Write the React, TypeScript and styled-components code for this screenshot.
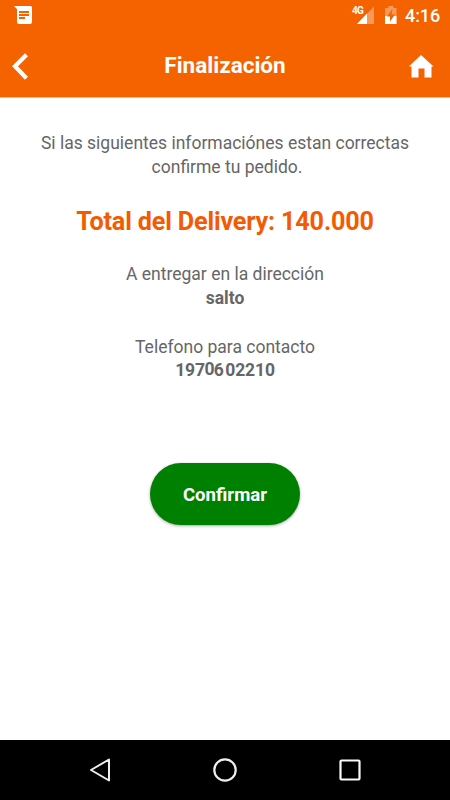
import React from "react";
import styled, { createGlobalStyle } from "styled-components";

const GlobalStyle = createGlobalStyle`
  * { box-sizing: border-box; }
  body { margin: 0; background: #fff; font-family: Roboto, "Liberation Sans", sans-serif; }
`;

const Screen = styled.div`
  width: 450px;
  height: 800px;
  display: flex;
  flex-direction: column;
  overflow: hidden;
  background: #fff;
`;

const Top = styled.div`
  height: 98px;
  background: #f56200;
  color: #fff;
  border-bottom: 1px solid #d8c5c0;
`;

const StatusBar = styled.div`
  height: 32px;
  display: flex;
  align-items: flex-start;
  justify-content: space-between;
  padding: 0 10px 0 13px;
`;

const StatusRight = styled.div`
  display: flex;
`;

const Battery = styled.svg`
  margin-left: 9px;
`;

const Clock = styled.time`
  width: 35px;
  margin-left: 7px;
  font-size: 18px;
  line-height: 32px;
  font-weight: 500;
  letter-spacing: -0.1px;
  white-space: nowrap;
`;

const Network = styled.span`
  width: 12px;
  margin-right: -7px;
  padding-top: 5px;
  font: 700 10px/12px Roboto, sans-serif;
  letter-spacing: -0.8px;
`;

const Header = styled.header`
  height: 65px;
  display: grid;
  grid-template-columns: 60px 1fr 60px;
  align-items: center;
`;

const Title = styled.h1`
  margin: 0;
  text-align: center;
  font-size: 22.5px;
  line-height: 26px;
  font-weight: 700;
`;

const IconButton = styled.button<{ $end?: boolean }>`
  height: 64px;
  padding: 0;
  border: 0;
  background: none;
  display: flex;
  align-items: center;
  justify-content: ${(p) => (p.$end ? "flex-end" : "flex-start")};
`;

const Content = styled.main`
  flex: 1;
  display: flex;
  flex-direction: column;
  align-items: center;
  padding-top: 33px;
  text-align: center;
`;

const Paragraph = styled.p<{ $gap?: number }>`
  margin: ${(p) => p.$gap ?? 0}px 0 0;
  font-size: 17.5px;
  line-height: 24px;
  color: #666;
  white-space: nowrap;
`;

const SecondLine = styled.span`
  padding-left: 4px;
`;

const Total = styled.h2`
  margin: 27px 0 0;
  font-size: 25.2px;
  line-height: 32px;
  font-weight: 700;
  letter-spacing: -0.17px;
  color: #f45a00;
  white-space: nowrap;
`;

const Value = styled.strong<{ $tight?: boolean }>`
  display: block;
  margin-top: ${(p) => (p.$tight ? -1 : 0)}px;
  font-weight: 700;
`;

const Digits = styled.span`
  letter-spacing: -0.12px;
`;

const Raised = styled.span`
  display: inline-block;
  transform: translateY(-1px);
  margin: 0 -0.5px;
`;

const Spaced = styled.span`
  margin-right: 1.5px;
`;

const Confirm = styled.button`
  width: 150px;
  height: 62px;
  margin-top: 81px;
  padding: 1px 0 0;
  border: 0;
  border-radius: 31px;
  background: #008000;
  color: #fff;
  font: 700 18.6px/24px Roboto, sans-serif;
  box-shadow: 0 1px 3px rgba(0, 0, 0, 0.35);
`;

const NavBar = styled.nav`
  height: 60px;
  background: #000;
  display: grid;
  grid-template-columns: repeat(3, 125px);
  justify-content: center;
  align-items: center;
  justify-items: center;
`;

export default function App() {
  return (
    <>
      <GlobalStyle />
      <Screen>
        <Top>
          <StatusBar>
            <svg width="20" height="32" viewBox="0 0 20 32">
              <path d="M1 6H17.5Q19 6 19 7.5V22Q19 24 17 24H6Q4 24 4 22V9Z" fill="#fff" />
              <path d="M6 12H16M6 15H16M6 18H12" stroke="#f56200" strokeWidth="2" />
            </svg>
            <StatusRight>
              <Network>4G</Network>
              <svg width="18" height="32" viewBox="0 0 18 32">
                <path d="M17 6.500V24H0Z" fill="#fff" opacity=".35" />
                <path d="M10 13.500V24H0Z" fill="#fff" />
              </svg>
              <Battery width="14" height="32" viewBox="0 0 14 32">
                <path d="M4.500 6H9.500V8H12.500V24H1V8H4.500Z" fill="#fff" opacity=".35" />
                <path d="M1 16H12.500V24H1Z" fill="#fff" />
                <path d="M8.500 9L3 16.500H6V21.500L11 14.500H7.500Z" fill="#f56200" />
              </Battery>
              <Clock>4:16</Clock>
            </StatusRight>
          </StatusBar>
          <Header>
            <IconButton aria-label="Volver">
              <svg width="32" height="64" viewBox="0 0 32 64">
                <path d="M26.500 21.700L15 33.300L26.500 45.300" fill="none" stroke="#fff" strokeWidth="4.2" />
              </svg>
            </IconButton>
            <Title>Finalización</Title>
            <IconButton $end aria-label="Inicio">
              <svg width="42" height="64" viewBox="0 0 42 64">
                <path d="M13 22L25.500 33.500H23.500V44.500H16.500V35.500H10.500V44.500H3.500V33.500H.8Z" fill="#fff" />
              </svg>
            </IconButton>
          </Header>
        </Top>
        <Content>
          <Paragraph>
            Si las siguientes informaciónes estan correctas
            <br />
            <SecondLine>confirme tu pedido.</SecondLine>
          </Paragraph>
          <Total>Total del Delivery: 140.000</Total>
          <Paragraph $gap={24}>
            A entregar en la dirección
            <Value>salto</Value>
          </Paragraph>
          <Paragraph $gap={25}>
            Telefono para contacto
            <Value $tight>
              <Digits>
                197<Raised>0</Raised>
                <Spaced>6</Spaced>02210
              </Digits>
            </Value>
          </Paragraph>
          <Confirm>Confirmar</Confirm>
        </Content>
        <NavBar>
          <svg width="30" height="30" viewBox="0 0 30 30">
            <path d="M24 4.500V25.500L6 15Z" fill="none" stroke="#eee" strokeWidth="2" strokeLinejoin="round" />
          </svg>
          <svg width="30" height="30" viewBox="0 0 30 30">
            <circle cx="15" cy="15" r="10.700" fill="none" stroke="#eee" strokeWidth="2.200" />
          </svg>
          <svg width="30" height="30" viewBox="0 0 30 30">
            <rect x="5.500" y="5.500" width="19" height="19" rx="1" fill="none" stroke="#fafafa" strokeWidth="2.200" />
          </svg>
        </NavBar>
      </Screen>
    </>
  );
}
